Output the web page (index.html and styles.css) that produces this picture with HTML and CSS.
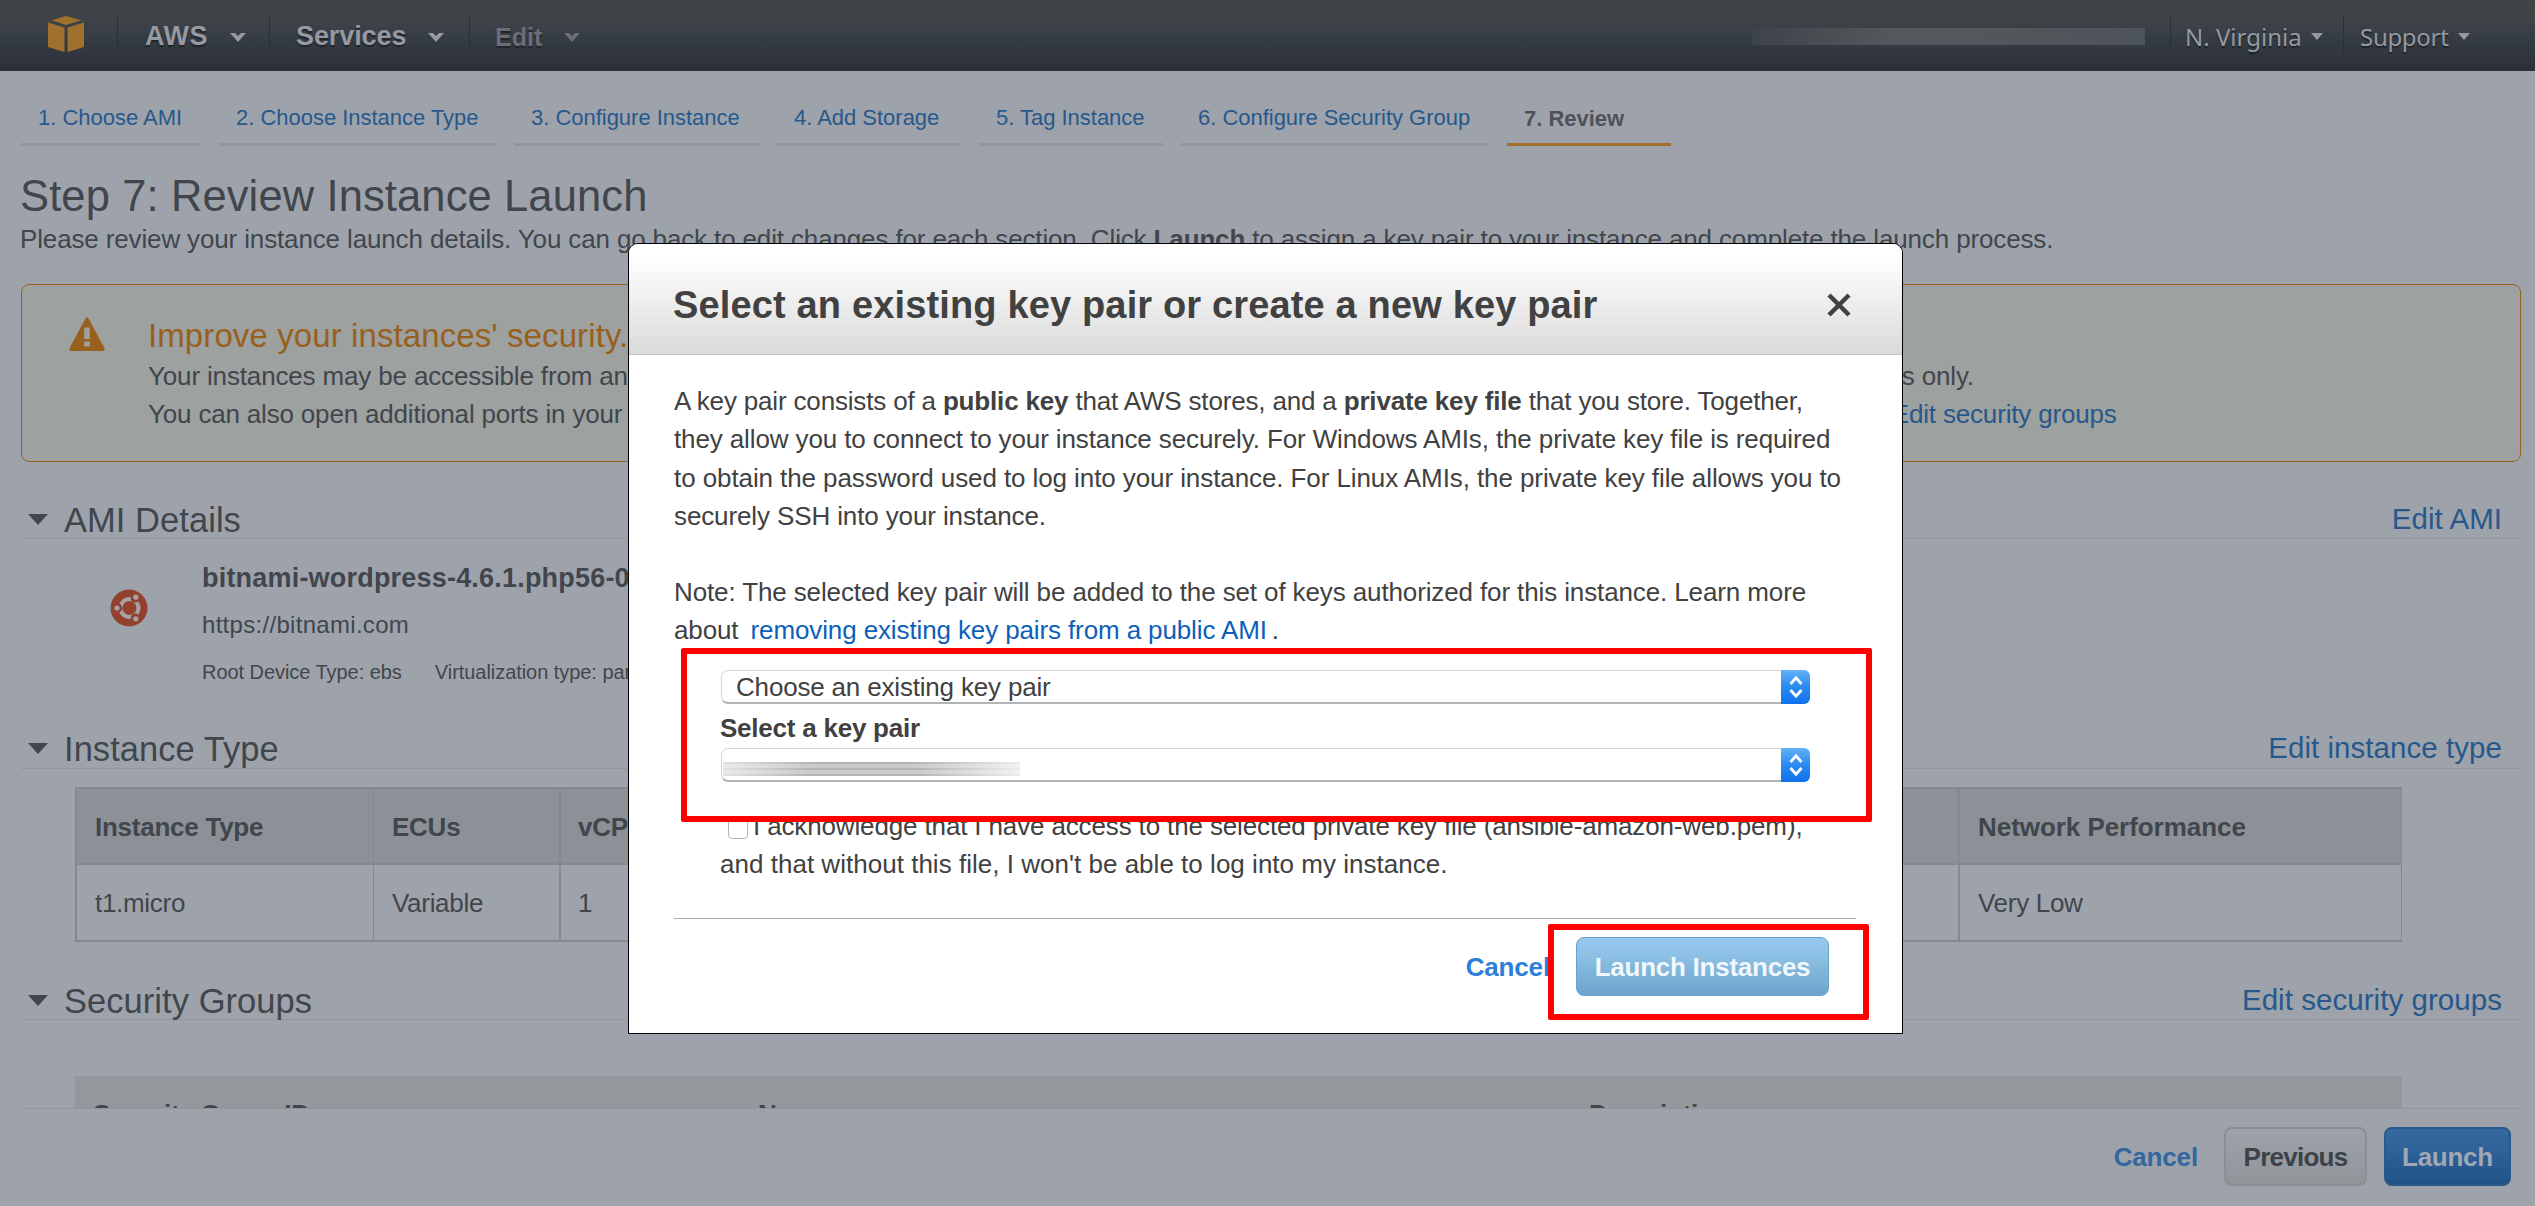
FILE: index.html
```
<!DOCTYPE html>
<html lang="en">
<head>
<meta charset="utf-8">
<title>EC2 Management Console</title>
<link rel="stylesheet" href="styles.css">
</head>
<body>
<div class="page">
  <header class="topbar">
    <svg class="logo" width="36" height="36" viewBox="0 0 36 36">
      <path d="M18 0 33 4.200 18 9 3.500 4.200z"/>
      <path d="M0 6.500l16.500 5V36L0 31z"/>
      <path d="M36 6.500l-16.500 5V36L36 31z"/>
    </svg>
    <nav class="menus">
      <a class="menu menu-aws">AWS<svg class="caret" width="16" height="9" viewBox="0 0 16 9"><path d="M0 0h5l3 3 3-3h5L8 9z"/></svg></a>
      <a class="menu menu-services">Services<svg class="caret" width="16" height="9" viewBox="0 0 16 9"><path d="M0 0h5l3 3 3-3h5L8 9z"/></svg></a>
      <a class="menu menu-edit">Edit<svg class="caret" width="16" height="9" viewBox="0 0 16 9"><path d="M0 0h5l3 3 3-3h5L8 9z"/></svg></a>
    </nav>
    <div class="account"></div>
    <nav class="menus menus-right">
      <a class="menu menu-small menu-region">N. Virginia<svg class="caret" width="12" height="7" viewBox="0 0 12 7"><path d="M0 0h12L6 7z"/></svg></a>
      <a class="menu menu-small menu-support">Support<svg class="caret" width="12" height="7" viewBox="0 0 12 7"><path d="M0 0h12L6 7z"/></svg></a>
    </nav>
  </header>

  <main class="content">
    <nav class="steps">
      <a class="step step-1">1. Choose AMI</a>
      <a class="step step-2">2. Choose Instance Type</a>
      <a class="step step-3">3. Configure Instance</a>
      <a class="step step-4">4. Add Storage</a>
      <a class="step step-5">5. Tag Instance</a>
      <a class="step step-6">6. Configure Security Group</a>
      <span class="step step-current">7. Review</span>
    </nav>

    <h1 class="title">Step 7: Review Instance Launch</h1>
    <p class="intro">Please review your instance launch details. You can go back to edit changes for each section. Click <b>Launch</b> to assign a key pair to your instance and complete the launch process.</p>

    <section class="alert">
      <svg class="alert-icon" width="36" height="34" viewBox="0 0 36 34">
        <path fill-rule="evenodd" d="M16.6 1.2Q18-.8 19.4 1.2L35.4 31q1 2.6-1.6 3H2.200q-2.600-.4-1.600-3zM15.200 10.500v11.500h5.600V10.500zM15.200 24.500v5h5.600v-5z"/>
      </svg>
      <div class="alert-body">
        <h2 class="alert-title">Improve your instances' security.</h2>
        <p class="alert-line">Your instances may be accessible from any IP address. We recommend that you update your security group rules to allow access from known IP addresses only.</p>
        <p class="alert-line alert-line-2">You can also open additional ports in your security groups to facilitate access to the application or service you're running, e.g., HTTP (80) for web servers. <a>Edit security groups</a></p>
      </div>
    </section>

    <section class="section section-ami">
      <div class="section-head">
        <svg class="toggle" width="20" height="11" viewBox="0 0 20 11"><path d="M0 0h20L10 11z"/></svg>
        <h2>AMI Details</h2>
        <a class="edit">Edit AMI</a>
      </div>
      <div class="ami">
        <svg class="ubuntu" width="38" height="38" viewBox="0 0 38 38">
          <circle class="u-disc" cx="19" cy="19" r="18.500"/>
          <circle class="u-ring" cx="19.500" cy="19" r="9"/>
          <g class="u-gap"><circle cx="8" cy="19" r="4.400"/><circle cx="25.200" cy="9.200" r="4.400"/><circle cx="25.200" cy="28.800" r="4.400"/></g>
          <g class="u-dot"><circle cx="7" cy="19" r="2.600"/><circle cx="25.800" cy="8.200" r="2.600"/><circle cx="25.800" cy="29.800" r="2.600"/></g>
        </svg>
        <div class="ami-text">
          <p class="ami-name">bitnami-wordpress-4.6.1.php56-0</p>
          <p class="ami-url">https://bitnami.com</p>
          <p class="ami-meta"><span>Root Device Type: ebs</span><span>Virtualization type: paravirtual</span></p>
        </div>
      </div>
    </section>

    <section class="section section-type">
      <div class="section-head">
        <svg class="toggle" width="20" height="11" viewBox="0 0 20 11"><path d="M0 0h20L10 11z"/></svg>
        <h2>Instance Type</h2>
        <a class="edit">Edit instance type</a>
      </div>
      <table class="grid">
        <colgroup><col class="c1"><col class="c2"><col class="c3"><col class="c4"><col class="c5"><col class="c6"><col class="c7"></colgroup>
        <tr><th>Instance Type</th><th>ECUs</th><th>vCPUs</th><th>Memory (GiB)</th><th>Instance Storage (GB)</th><th>EBS-Optimized Available</th><th>Network Performance</th></tr>
        <tr><td>t1.micro</td><td>Variable</td><td>1</td><td>0.613</td><td>EBS only</td><td>-</td><td>Very Low</td></tr>
      </table>
    </section>

    <section class="section section-groups">
      <div class="section-head">
        <svg class="toggle" width="20" height="11" viewBox="0 0 20 11"><path d="M0 0h20L10 11z"/></svg>
        <h2>Security Groups</h2>
        <a class="edit">Edit security groups</a>
      </div>
      <div class="groups-head"><span>Security Group ID</span><span>Name</span><span>Description</span></div>
    </section>
  </main>

  <footer class="actions">
    <a class="cancel">Cancel</a>
    <button class="btn btn-previous">Previous</button>
    <button class="btn btn-launch">Launch</button>
  </footer>

  <div class="modal">
    <div class="modal-head">
      <h2>Select an existing key pair or create a new key pair</h2>
      <svg class="close" width="24" height="24" viewBox="0 0 24 24"><path d="M2 2l20 20M22 2 2 22"/></svg>
    </div>
    <div class="modal-body">
      <p class="text"><span class="text-first">A key pair consists of a <b>public key</b> that AWS stores, and a <b>private key file</b> that you store. Together,</span><br>they allow you to connect to your instance securely. For Windows AMIs, the private key file is required<br><span class="text-third">to obtain the password used to log into your instance. For Linux AMIs, the private key file allows you to</span><br>securely SSH into your instance.</p>
      <p class="text note">Note: The selected key pair will be added to the set of keys authorized for this instance. Learn more<br>about <a>removing existing key pairs from a public AMI</a><span class="dot">.</span></p>
      <div class="form">
        <div class="select">
          <span class="select-value">Choose an existing key pair</span>
          <span class="stepper"><svg width="14" height="22" viewBox="0 0 14 22"><path d="M1.500 8 7 1.800 12.500 8M1.500 14 7 20.200 12.500 14"/></svg></span>
        </div>
        <div class="label">Select a key pair</div>
        <div class="select">
          <span class="smear"></span>
          <span class="stepper"><svg width="14" height="22" viewBox="0 0 14 22"><path d="M1.500 8 7 1.800 12.500 8M1.500 14 7 20.200 12.500 14"/></svg></span>
        </div>
        <p class="ack"><span class="checkbox"></span><span class="ack-first">I acknowledge that I have access to the selected private key file (ansible-amazon-web.pem),</span><br>and that without this file, I won't be able to log into my instance.</p>
      </div>
      <div class="modal-actions">
        <a class="cancel">Cancel</a>
        <button class="btn btn-primary">Launch Instances</button>
      </div>
    </div>
    <div class="mark mark-form"></div>
    <div class="mark mark-button"></div>
  </div>
</div>
</body>
</html>
```
FILE: styles.css
```
* { box-sizing: border-box; }
body {
  margin: 0;
  font-family: "Liberation Sans", Arial, sans-serif;
  font-size: 26px;
  letter-spacing: -0.15px;
  color: #41464c;
}
h1, h2, p { margin: 0; font-weight: normal; white-space: nowrap; }
a { color: #27588c; }
svg { display: block; flex: none; }
button { font: inherit; }

.page {
  position: relative;
  display: flex;
  flex-direction: column;
  width: 2535px;
  height: 1206px;
  overflow: hidden;
  background: #9ea3ab;
}

/* Top bar */
.topbar {
  flex: none;
  display: flex;
  align-items: flex-start;
  height: 71px;
  padding: 16px 0 0 48px;
  background: linear-gradient(#404446 0, #3d4347 30%, #373d45 50%, #2b3037 100%);
}
.logo { fill: #a0702d; }
.menus { display: flex; margin-left: 33px; }
.menu {
  display: flex;
  align-items: flex-start;
  height: 37px;
  padding-left: 27px;
  border-left: 1px solid #2b3037;
  font-weight: bold;
  line-height: 42px;
  color: #9599a0;
  text-shadow: 0 2px 1px #1f2429;
  white-space: nowrap;
}
.menu-aws { width: 152px; font-size: 27px; line-height: 41px; letter-spacing: 0.5px; }
.menu-services { width: 200px; padding-left: 26px; font-size: 27px; line-height: 41px; letter-spacing: -0.1px; }
.menu-edit { width: 130px; padding-left: 25px; font-size: 25px; line-height: 42px; letter-spacing: 0; color: #6a6e77; }
.menu .caret { margin: 17px 0 0 22px; fill: currentColor; }
.account {
  width: 393px;
  height: 17px;
  margin: 12px 25px 0 auto;
  background: linear-gradient(90deg, #3c4349, #54585c 35%, #54585c 55%, #4c5359);
}
.menus-right { margin-left: 0; }
.menu-small {
  padding-left: 14px;
  font-family: "Noto Sans", sans-serif;
  font-weight: normal;
  font-size: 24px;
  line-height: 41px;
  letter-spacing: 0;
}
.menu-region { width: 173px; }
.menu-support { width: 192px; padding-left: 16px; letter-spacing: -0.3px; }
.menu-small .caret { margin: 17px 0 0 9px; }

/* Wizard steps */
.content { flex: 1; min-height: 0; overflow: hidden; padding: 0 14px 0 21px; }
.steps { display: flex; gap: 18px; padding-top: 30px; }
.step {
  height: 45px;
  padding-left: 17px;
  border-bottom: 3px solid #91969b;
  font-size: 22px;
  line-height: 34px;
  letter-spacing: -0.02px;
  color: #27588c;
  white-space: nowrap;
}
.step-1 { width: 180px; }
.step-2 { width: 277px; }
.step-3 { width: 245px; }
.step-4 { width: 184px; }
.step-5 { width: 184px; }
.step-6 { width: 308px; }
.step-current { width: 164px; border-color: #a26f29; font-weight: bold; line-height: 36px; color: #4d5257; }

.title { margin: 26px 0 0 -1px; font-size: 43.500px; line-height: 48px; letter-spacing: 0.12px; }
.intro { margin: 1px 0 0 -1px; line-height: 36px; letter-spacing: -0.14px; }

/* Security notice */
.alert {
  display: flex;
  height: 178px;
  margin-top: 27px;
  padding: 31px 0 0 47px;
  border: 1px solid #97621f;
  border-radius: 8px;
  background: #9da19f;
}
.alert-icon { margin-top: 1px; fill: #98601d; }
.alert-body { margin-left: 43px; }
.alert-title { font-size: 33px; line-height: 40px; letter-spacing: 0.1px; color: #98601d; }
.alert-line { margin-top: 1px; line-height: 38px; letter-spacing: -0.155px; }
.alert-line-2 { margin-top: 0; letter-spacing: -0.18px; }

/* Sections */
.section-head {
  display: flex;
  align-items: flex-start;
  height: 41px;
  border-bottom: 1px solid #92979d;
}
.section-head h2 { margin-left: 16px; font-size: 34.5px; line-height: 44px; letter-spacing: 0.05px; }
.toggle { margin: 16px 0 0 7px; fill: #41464c; }
.edit { margin: 0 19px 0 auto; font-size: 29.5px; line-height: 42px; letter-spacing: 0.05px; white-space: nowrap; }
.section-ami { height: 229px; margin-top: 36px; }
.section-type { height: 252px; }
.section-type .section-head { height: 42px; }

.ami { display: flex; padding: 21px 0 0 90px; }
.ubuntu { margin: 29px 0 0 -1px; }
.u-disc { fill: #94402f; }
.u-ring { fill: none; stroke: #a5a3a6; stroke-width: 4; }
.u-gap { fill: #94402f; }
.u-dot { fill: #a5a3a6; }
.ami-text { margin-left: 54px; }
.ami-name { font-weight: bold; font-size: 27px; line-height: 36px; letter-spacing: 0.2px; }
.ami-url { margin-top: 13px; font-size: 24px; line-height: 32px; letter-spacing: 0.3px; }
.ami-meta { display: flex; gap: 33px; margin-top: 17px; font-size: 20px; line-height: 28px; letter-spacing: -0.05px; }

.grid {
  table-layout: fixed;
  width: 2327px;
  margin: 18px 0 0 54px;
  border-spacing: 0;
  border-top: 2px solid #83898f;
  border-right: 1px solid #83898f;
}
.c1 { width: 298px; }
.c2 { width: 186px; }
.c3 { width: 200px; }
.c4 { width: 320px; }
.c5 { width: 420px; }
.c6 { width: 459px; }
.c7 { width: 443px; }
.grid th, .grid td {
  padding: 2px 0 0 18px;
  border-left: 2px solid #83898f;
  border-bottom: 2px solid #83898f;
  text-align: left;
  white-space: nowrap;
}
.grid th { height: 76px; background: #8b9196; letter-spacing: -0.25px; }
.grid td { height: 77px; letter-spacing: -0.3px; }
.grid th:nth-child(2), .grid td:nth-child(2) { border-left-width: 1px; }
.grid th:nth-child(3), .grid td:nth-child(3) { padding-left: 17px; }
.grid th:last-child { letter-spacing: -0.05px; }

.groups-head {
  display: grid;
  grid-template-columns: 665px 831px 1fr;
  width: 2327px;
  height: 80px;
  margin: 56px 0 0 54px;
  padding-left: 18px;
  background: #92989c;
  font-weight: bold;
  letter-spacing: -0.25px;
  line-height: 76px;
}

/* Buttons and footer */
.btn {
  height: 59px;
  padding: 1px 0 0;
  border: 2px solid;
  border-radius: 8px;
  font-weight: bold;
  letter-spacing: -0.25px;
}
.cancel { font-weight: bold; }
.actions {
  flex: none;
  display: flex;
  align-items: flex-start;
  justify-content: flex-end;
  height: 98px;
  margin: 0 14px 0 21px;
  padding: 18px 10px 0 0;
  border-top: 1px solid #92979d;
}
.actions .cancel { margin-right: 26px; line-height: 60px; color: #32689e; }
.btn-previous {
  width: 143px;
  margin-right: 17px;
  border-color: #898f95;
  background: linear-gradient(#9ea3ab, #8f9599);
  color: #3d4248;
  letter-spacing: -0.75px;
}
.btn-launch {
  width: 127px;
  border-color: #2a5889;
  background: linear-gradient(#356ba0, #22528a);
  color: #a0a8b3;
}

/* Key pair dialog */
.modal {
  position: absolute;
  left: 628px;
  top: 243px;
  width: 1275px;
  height: 791px;
  border: 1px solid #000;
  border-radius: 10px 10px 0 0;
  background: #fff;
  color: #414141;
}
.modal-head {
  display: flex;
  justify-content: space-between;
  height: 111px;
  padding: 49px 51px 0 44px;
  border-bottom: 1px solid #c4c2c2;
  border-radius: 9px 9px 0 0;
  background: linear-gradient(#fff 10%, #ededed 55%, #dadada);
}
.modal-head h2 { margin-top: -12px; font-weight: bold; font-size: 38px; line-height: 48px; letter-spacing: 0.15px; }
.close { stroke: #414141; stroke-width: 4.5; fill: none; }
.modal-body { padding: 27px 46px 0 45px; }
.modal-body a { color: #0d5fb9; }
.text { line-height: 38.300px; letter-spacing: -0.12px; }
.text-first { letter-spacing: -0.17px; }
.text-third { letter-spacing: -0.09px; }
.note { margin-top: 38px; }
.note a { margin-left: 5px; }
.dot { margin-left: 5px; }
.form { width: 1090px; margin: 20px 0 0 46px; }
.select {
  display: flex;
  justify-content: space-between;
  height: 34px;
  margin-left: 1px;
  border: 1px solid #d6d6d6;
  border-right: 0;
  border-bottom: 2px solid #b2b4b3;
  border-radius: 7px;
}
.select-value { padding-left: 14px; line-height: 32px; letter-spacing: -0.18px; }
.stepper {
  display: flex;
  align-items: center;
  justify-content: center;
  width: 29px;
  height: 34px;
  margin-top: -1px;
  border-radius: 0 6px 6px 0;
  background: linear-gradient(#64b2f6, #2d8df3 45%, #0e71ec);
}
.stepper svg { fill: none; stroke: #fff; stroke-width: 2.800; }
.smear {
  width: 297px;
  height: 14px;
  margin: 13px 0 0 1px;
  background:
    linear-gradient(90deg, rgba(255,255,255,.6), transparent 30%, transparent 65%, rgba(255,255,255,.75)),
    repeating-linear-gradient(#b4b4b4 0 2px, #cacaca 2px 6px);
}
.label { height: 44px; font-weight: bold; line-height: 48px; letter-spacing: -0.23px; }
.ack { margin-top: 25px; line-height: 38.300px; letter-spacing: 0.02px; }
.ack-first { letter-spacing: -0.14px; }
.checkbox {
  display: inline-block;
  width: 20px;
  height: 20px;
  margin: 0 5px 0 8px;
  border: 1px solid #b5b5b5;
  border-radius: 4px;
  vertical-align: -4px;
}
.modal-actions {
  display: flex;
  justify-content: flex-end;
  margin-top: 35px;
  padding: 18px 27px 0 0;
  border-top: 1px solid #a8a8a8;
}
.modal-actions .cancel { margin-right: 26px; line-height: 60px; color: #2a80dc; }
.btn-primary {
  width: 253px;
  border: 1px solid #68a3cb;
  background: linear-gradient(#97c9ee, #8bbfe3 35%, #6ba4cc);
  color: #f1f7fc;
}

/* Highlight frames */
.mark { position: absolute; border: 6px solid #f00; border-radius: 2px; }
.mark-form { left: 52px; top: 404px; width: 1191px; height: 174px; }
.mark-button { left: 919px; top: 680px; width: 321px; height: 96px; }
```
